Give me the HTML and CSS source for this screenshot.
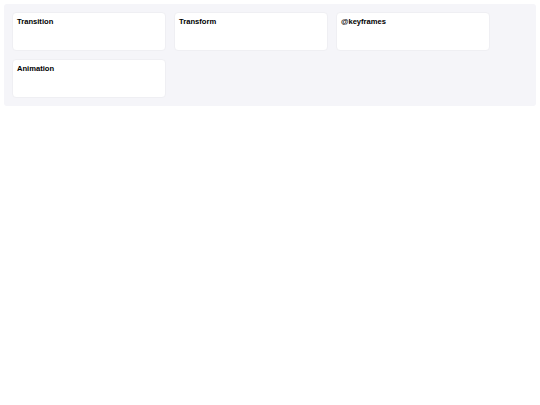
FILE: index.html
```html
<!DOCTYPE html>
<html>
<head>
  <title>CSS Animation Topics</title>
  <link rel="stylesheet" href="styles.css">
</head>
<body>
  <div class="board">
    <div class="card"><h3>Transition</h3></div>
    <div class="card"><h3>Transform</h3></div>
    <div class="card"><h3>@keyframes</h3></div>
    <div class="card"><h3>Animation</h3></div>
  </div>
</body>
</html>
```

FILE: styles.css
```css
body {
  margin: 4px;
  font-family: "Liberation Sans", Arial, sans-serif;
  background: #ffffff;
}
.board {
  display: flex;
  flex-wrap: wrap;
  gap: 8px;
  padding: 8px;
  background: #f5f5f9;
  border-radius: 3px;
}
.card {
  box-sizing: border-box;
  width: 154px;
  height: 39px;
  padding: 4px;
  background: white;
  border: 1px solid #efeff3;
  border-radius: 4px;
}
.card h3 {
  margin: 0;
  font-size: 7.6px;
  font-weight: bold;
  color: #000;
}
```
